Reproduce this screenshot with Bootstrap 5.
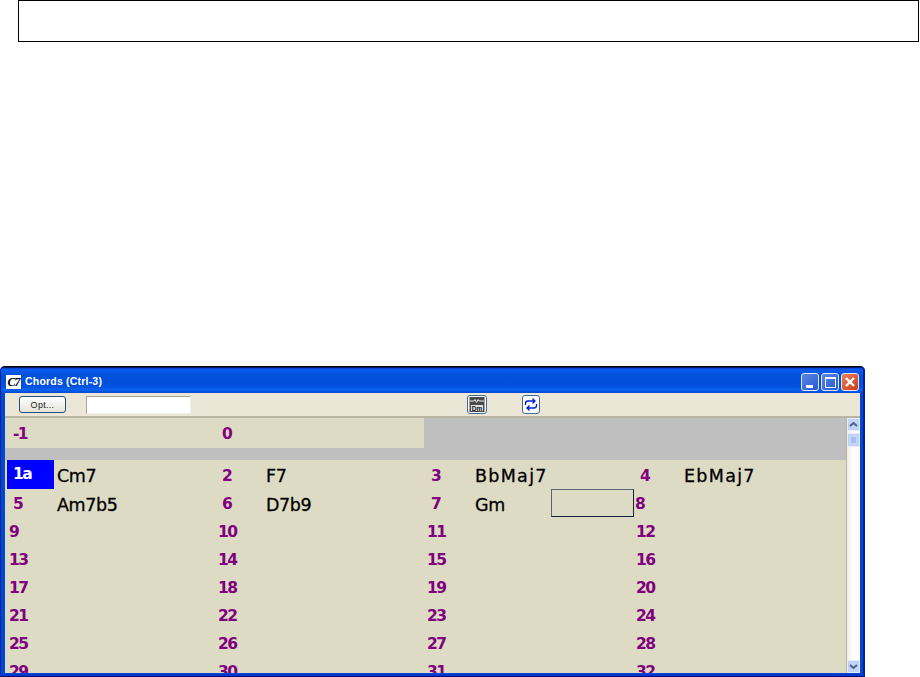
<!DOCTYPE html>
<html lang="en"><head><meta charset="utf-8"><title>Chords</title>
<link href="https://cdn.jsdelivr.net/npm/bootstrap@5.3.0/dist/css/bootstrap.min.css" rel="stylesheet">
<style>
html,body{height:677px;overflow:hidden;background:#fff}
.topbox{margin:0 1px 324px 18px;height:42px;border:1px solid #000}
.xpwin{width:865px;height:311px;background:linear-gradient(#000 0,#000 1px,#0a3fd0 2px,#0a5ef0 4px,#0352dc 8px,#0050de 20px,#0a62ee 24px,#0048d0 27px);border-radius:5px 5px 0 0;padding:27px 5px 4px 5px;box-shadow:inset 0 -1px 0 #00107a,inset 0 -3px 0 #0038cc,inset -2px 0 0 #00209a,inset 1px 0 0 #0020a0;position:relative;font-family:"Liberation Sans",sans-serif}
.ttl{height:27px;margin-top:-27px;color:#fff;font-size:10.5px;font-weight:700;letter-spacing:.2px;gap:4px;padding:5px 1px 0 1px}
.appico{width:15px;height:14px;background:#fff;color:#000;font:italic 700 12px/14px "Liberation Serif",serif;text-align:center;letter-spacing:-1px}
.capb{width:18px;height:18px;border:1px solid #dfe8fb;border-radius:3px;background:linear-gradient(135deg,#5b86e6,#2a58d0);margin-left:2px;position:relative}
.capb.cls{background:linear-gradient(135deg,#e8805c,#cf3a16)}
.capb svg{position:absolute;inset:0}
.tbar{height:25px;background:#ece6d6;border-bottom:2px solid #b9b5a1;padding:3px 0 0 14px;position:relative}
.optb{width:47px;height:17px;border:1px solid #1f4f82;border-radius:3px;background:linear-gradient(#fff,#e6e3d7);font-size:9px;letter-spacing:.3px;line-height:14px;text-align:center;color:#222;padding:0}
.edbx{width:105px;height:18px;margin-left:20px;background:#fff;border:1px solid #a9a697;border-right-color:#eee;border-bottom-color:#eee}
.tool{width:20px;height:19px;background:#fff;border:1px solid #3d6a96;border-radius:3px;margin-top:-1px;padding:0;line-height:0}
.t1{margin-left:276px}.t2{margin-left:35px;width:18px}
.mainrow{height:255px}
.sheet{width:842px;height:255px;overflow:hidden;background:#dddbc4}
.rowm1{height:30px}
.half{width:419px;padding-top:2px}
.grayr{flex:1;background:#bfbfbf}
.band{height:12px;background:#bfbfbf}
.chgrid{display:grid;grid-template-columns:repeat(4,209px);grid-template-rows:29px;grid-auto-rows:28px}
.cellc{display:flex;align-items:center;position:relative}
.num{width:52px;padding-left:4px;font:700 15.5px/28px "DejaVu Sans",sans-serif;color:#800080;flex:none;letter-spacing:-1.6px;margin-top:2px}
.num8{padding-left:8px}.num9{padding-left:3px}
.wide-num{width:209px}
.half .num{margin-top:0}
.sel{background:#0000ff;color:#fff;margin:0 3px 0 2px;width:47px;padding-left:6px;align-self:stretch;line-height:29px}
.chd{font:400 17.5px/28px "DejaVu Sans",sans-serif;color:#000;letter-spacing:-.4px;-webkit-text-stroke:.3px #000;margin-top:3px}
.chdw{letter-spacing:1.3px}
.cursorbox{position:absolute;left:128px;top:0;width:83px;height:28px;border:1px solid #5c6470;border-right-color:#14213d;border-bottom-color:#14213d}
.sbar{width:13px;height:255px;background:linear-gradient(90deg,#f1ebe4,#fff 50%,#fbf8f4);border-left:1px solid #b9b5a1;box-sizing:content-box;position:relative}
.sbtn{width:13px;height:13px;background:#c3d3f7;border:1px solid #e4ecfd;position:absolute;left:0}
.sup{top:0}.sthumb{top:15px;height:14px}.sdn{bottom:0}
</style></head><body>
<div class="topbox"></div>
<div class="xpwin">
<div class="ttl d-flex align-items-center">
<span class="appico">C7</span><span>Chords (Ctrl-3)</span>
<span class="ms-auto d-flex">
<span class="capb"><svg width="16" height="16"><rect x="4" y="11" width="7" height="3" fill="#fff"/></svg></span>
<span class="capb"><svg width="16" height="16"><path d="M3.500 3.500h10v10h-10z" fill="none" stroke="#fff"/><path d="M3 3h11v2H3z" fill="#fff"/></svg></span>
<span class="capb cls"><svg width="16" height="16"><path d="M4 4l8 8M12 4l-8 8" stroke="#fff" stroke-width="2.400"/></svg></span>
</span>
</div>
<div class="tbar d-flex align-items-start">
<button class="optb" type="button">Opt...</button>
<div class="edbx"></div>
<button class="tool t1" type="button"><svg width="18" height="17"><rect x="1.500" y="1" width="15" height="15" fill="#4a4a4a"/><path d="M2 5h4l1-1.500 1.500 3 1.500-3 1 1.500h5" stroke="#e8e8e8" fill="none"/><rect x="3" y="9" width="12" height="6" fill="#e2e2e2"/><text x="9" y="14.500" font-size="6.500" font-weight="700" text-anchor="middle" fill="#111" font-family="Liberation Sans">Dm</text></svg></button>
<button class="tool t2" type="button"><svg width="16" height="17"><path d="M2.500 9V7.500Q2.500 5 5 5h6.500M9.500 2.500L12 5 9.500 7.500M13.500 8v1.500Q13.500 12 11 12H4.500M6.500 9.500L4 12l2.500 2.500" fill="none" stroke="#0018e0" stroke-width="1.300"/></svg></button>
</div>
<div class="mainrow d-flex">
<div class="sheet">
<div class="rowm1 d-flex">
<div class="half d-flex"><span class="num num8 wide-num">-1</span><span class="num num8">0</span></div>
<div class="grayr"></div>
</div>
<div class="band"></div>
<div class="chgrid">
<div class="cellc"><span class="num sel">1a</span><span class="chd">Cm7</span></div>
<div class="cellc"><span class="num num8">2</span><span class="chd">F7</span></div>
<div class="cellc"><span class="num num8">3</span><span class="chd chdw">BbMaj7</span></div>
<div class="cellc"><span class="num num8">4</span><span class="chd chdw">EbMaj7</span></div>
<div class="cellc"><span class="num num8">5</span><span class="chd">Am7b5</span></div>
<div class="cellc"><span class="num num8">6</span><span class="chd">D7b9</span></div>
<div class="cellc"><span class="num num8">7</span><span class="chd">Gm</span><span class="cursorbox"></span></div>
<div class="cellc"><span class="num num9">8</span></div>
<div class="cellc"><span class="num">9</span></div><div class="cellc"><span class="num">10</span></div><div class="cellc"><span class="num">11</span></div><div class="cellc"><span class="num">12</span></div>
<div class="cellc"><span class="num">13</span></div><div class="cellc"><span class="num">14</span></div><div class="cellc"><span class="num">15</span></div><div class="cellc"><span class="num">16</span></div>
<div class="cellc"><span class="num">17</span></div><div class="cellc"><span class="num">18</span></div><div class="cellc"><span class="num">19</span></div><div class="cellc"><span class="num">20</span></div>
<div class="cellc"><span class="num">21</span></div><div class="cellc"><span class="num">22</span></div><div class="cellc"><span class="num">23</span></div><div class="cellc"><span class="num">24</span></div>
<div class="cellc"><span class="num">25</span></div><div class="cellc"><span class="num">26</span></div><div class="cellc"><span class="num">27</span></div><div class="cellc"><span class="num">28</span></div>
<div class="cellc"><span class="num">29</span></div><div class="cellc"><span class="num">30</span></div><div class="cellc"><span class="num">31</span></div><div class="cellc"><span class="num">32</span></div>
</div>
</div>
<div class="sbar">
<div class="sbtn sup"><svg class="d-block" width="11" height="11"><path d="M2 7l3.500-3L9 7" fill="none" stroke="#4d6185" stroke-width="2"/></svg></div>
<div class="sbtn sthumb"><svg class="d-block" width="11" height="12"><path d="M3 4h5M3 6h5M3 8h5" stroke="#8fa8df"/></svg></div>
<div class="sbtn sdn"><svg class="d-block" width="11" height="11"><path d="M2 4l3.500 3L9 4" fill="none" stroke="#4d6185" stroke-width="2"/></svg></div>
</div>
</div>
</div>
<script src="https://cdn.jsdelivr.net/npm/bootstrap@5.3.0/dist/js/bootstrap.bundle.min.js"></script>
</body></html>
